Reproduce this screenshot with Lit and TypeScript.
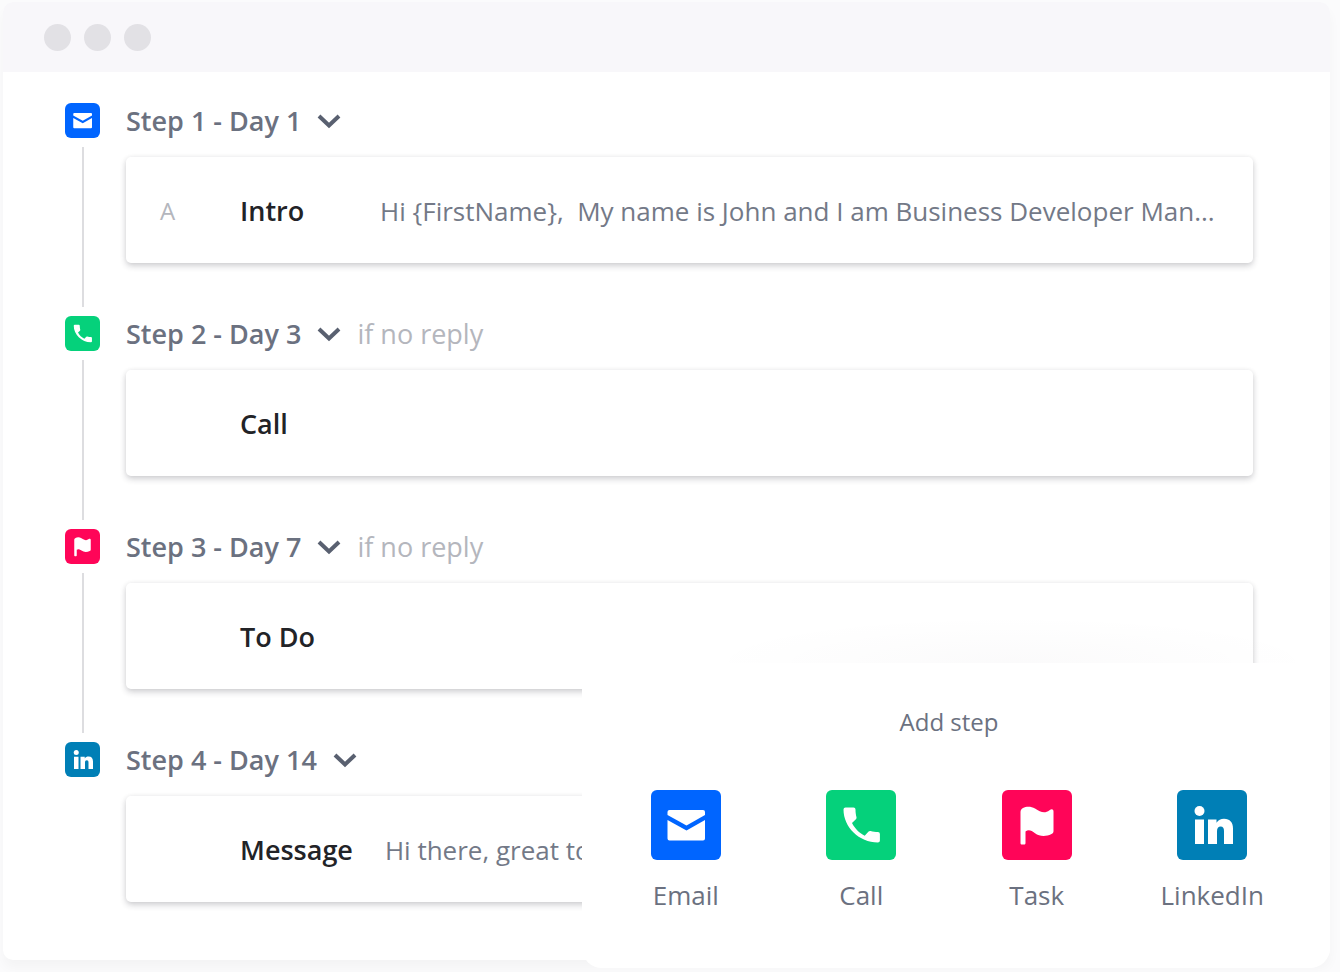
import { LitElement, html, css, svg, type TemplateResult } from "lit";
import { customElement, property } from "lit/decorators.js";

type Kind = "email" | "call" | "task" | "linkedin";

interface Step {
  kind: Kind;
  title: string;
  condition?: string;
  variant?: string;
  name: string;
  preview?: string;
}

const steps: Step[] = [
  {
    kind: "email",
    title: "Step 1 - Day 1",
    variant: "A",
    name: "Intro",
    preview: "Hi {FirstName},\u00a0 My name is John and I am Business Developer Man...",
  },
  { kind: "call", title: "Step 2 - Day 3", condition: "if no reply", name: "Call" },
  { kind: "task", title: "Step 3 - Day 7", condition: "if no reply", name: "To Do" },
  { kind: "linkedin", title: "Step 4 - Day 14", name: "Message", preview: "Hi there, great to" },
];

const choices: { kind: Kind; label: string }[] = [
  { kind: "email", label: "Email" },
  { kind: "call", label: "Call" },
  { kind: "task", label: "Task" },
  { kind: "linkedin", label: "LinkedIn" },
];

const glyphs: Record<Kind, TemplateResult> = {
  email: svg`<path d="M18.500 20H52a2 2 0 0 1 2 2v3L35.500 35.500 16.500 25v-3a2 2 0 0 1 2-2z"/>
    <path d="M16.500 30L35.500 40.500 54 30V48.500a2 2 0 0 1-2 2H18.500a2 2 0 0 1-2-2z"/>`,
  call: svg`<path d="M19.500 17.500h8a2 2 0 0 1 2 2c0 3 .4 5.300 1 7.800a2 2 0 0 1-.6 2L26 33c3.200 6 7 9.600 12.700 12.700l3.900-4.100a2 2 0 0 1 2-.5c2.400.8 4.800 1 7.300 1a2 2 0 0 1 2 2V50.500a2 2 0 0 1-2 2C33 52.500 17.500 37 17.500 19.500a2 2 0 0 1 2-2z"/>`,
  task: svg`<path d="M18.500 22c0-2 .8-3 2.500-4 3-1.700 8-2 12 .5 5.500 3.500 9.500 5.500 14.500 1.700 2-1.500 4-1.200 4 1.300V41c0 1.400-.5 2.300-2 3-6 3-12 2.500-16.500-.8-3.500-2.700-6.500-4-9.500-1.700V53c0 1-.6 1.500-1.500 1.500H20c-1 0-1.500-.5-1.500-1.500z"/>`,
  linkedin: svg`<circle cx="22.500" cy="21" r="5"/>
    <path d="M18 29.500h9V54h-9zM31 29.500h8.500v3.300c1.800-2.800 4.300-4 7.500-4 6 0 9 3.700 9 10V54h-9V41c0-3-1-4.500-3.300-4.500-2.500 0-3.700 1.700-3.700 4.700V54h-9z"/>`,
};

@customElement("step-icon")
export class StepIcon extends LitElement {
  @property({ reflect: true }) kind: Kind = "email";

  static styles = css`
    :host {
      display: block;
      flex: none;
      background: #0065ff;
      border-radius: 6px;
    }
    :host([kind="call"]) { background: #05d17b; }
    :host([kind="task"]) { background: #ff0558; }
    :host([kind="linkedin"]) { background: #007fb6; }
    .glyph {
      display: block;
      width: 100%;
      height: 100%;
      fill: #fff;
    }
  `;

  render() {
    return html`<svg class="glyph" viewBox="0 0 70 70" aria-hidden="true">${glyphs[this.kind]}</svg>`;
  }
}

@customElement("sequence-step")
export class SequenceStep extends LitElement {
  @property({ attribute: false }) step!: Step;
  @property({ type: Boolean }) last = false;

  static styles = css`
    :host {
      display: grid;
      grid-template-columns: 35px minmax(0, 1fr);
      column-gap: 26px;
    }
    .rail {
      display: flex;
      flex-direction: column;
      align-items: center;
      gap: 9px;
      padding-bottom: 9px;
    }
    .icon {
      width: 35px;
      height: 35px;
    }
    .line {
      flex: 1;
      width: 2px;
      background: #dddde0;
    }
    .body {
      padding-bottom: 53px;
    }
    .head {
      display: flex;
      align-items: center;
      gap: 16px;
      height: 36px;
      margin-bottom: 18px;
      font-size: 27px;
    }
    .toggle {
      display: flex;
      align-items: center;
      gap: 16px;
      padding: 0;
      border: 0;
      background: none;
      font: inherit;
      font-weight: 600;
      color: #6b7180;
      cursor: pointer;
    }
    .chevron {
      width: 24px;
      height: 16px;
      fill: none;
      stroke: #596070;
      stroke-width: 4;
    }
    .condition {
      color: #b4b6bd;
    }
    .card {
      display: flex;
      align-items: center;
      height: 106px;
      padding: 2px 34px 0;
      box-sizing: border-box;
      border-radius: 5px;
      background: #fff;
      box-shadow: 0 3px 6px rgba(30, 30, 45, 0.2), 0 0 5px rgba(30, 30, 45, 0.05);
    }
    .variant {
      flex: none;
      width: 80px;
      color: #b4b6bd;
      font-size: 24px;
    }
    .name {
      flex: none;
      min-width: 108px;
      margin-right: 32px;
      color: #222327;
      font-size: 27px;
      font-weight: 600;
    }
    .preview {
      min-width: 0;
      color: #737987;
      white-space: nowrap;
      overflow: hidden;
    }
  `;

  render() {
    const s = this.step;
    return html`
      <div class="rail">
        <step-icon class="icon" kind=${s.kind}></step-icon>
        ${this.last ? "" : html`<div class="line"></div>`}
      </div>
      <div class="body">
        <div class="head">
          <button class="toggle" type="button">
            ${s.title}
            <svg class="chevron" viewBox="0 0 24 16" aria-hidden="true"><path d="M2 3l10 9.500L22 3" /></svg>
          </button>
          ${s.condition ? html`<span class="condition">${s.condition}</span>` : ""}
        </div>
        <div class="card">
          <span class="variant">${s.variant ?? ""}</span>
          <span class="name">${s.name}</span>
          <span class="preview">${s.preview ?? ""}</span>
        </div>
      </div>
    `;
  }
}

@customElement("add-step-menu")
export class AddStepMenu extends LitElement {
  static styles = css`
    :host {
      display: block;
      box-sizing: border-box;
      padding: 40px 30px 55px 16px;
      border-radius: 20px;
      background: #fff;
    }
    .title {
      margin: 0 0 49px;
      font-size: 24px;
      line-height: 38px;
      font-weight: 400;
      text-align: center;
    }
    .choices {
      display: grid;
      grid-template-columns: repeat(4, minmax(0, 1fr));
    }
    .choice {
      display: flex;
      flex-direction: column;
      align-items: center;
      gap: 17px;
      padding: 0;
      border: 0;
      background: none;
      font: inherit;
      line-height: 36px;
      color: inherit;
      cursor: pointer;
    }
    .icon {
      width: 70px;
      height: 70px;
    }
  `;

  render() {
    return html`
      <h2 class="title">Add step</h2>
      <div class="choices">
        ${choices.map(
          (c) => html`<button class="choice" type="button">
            <step-icon class="icon" kind=${c.kind}></step-icon>
            ${c.label}
          </button>`,
        )}
      </div>
    `;
  }
}

@customElement("app-root")
export class AppRoot extends LitElement {
  static styles = css`
    :host {
      display: block;
      box-sizing: border-box;
      min-height: 100vh;
      padding: 2px 10px 12px 3px;
      background: #fbfbfc;
      font-family: "Open Sans", "Noto Sans", sans-serif;
      font-size: 26px;
      line-height: 36px;
      color: #6b7180;
    }
    .window {
      position: relative;
      border-radius: 10px;
      background: #fff;
      box-shadow: 0 8px 12px rgba(0, 0, 0, 0.03);
    }
    .bar {
      display: flex;
      align-items: center;
      gap: 13px;
      height: 70px;
      padding: 0 41px;
      border-radius: 10px 10px 0 0;
      background: #f8f7fa;
    }
    .dot {
      width: 27px;
      height: 27px;
      border-radius: 50%;
      background: #e2e1e5;
    }
    .steps {
      margin: 0;
      padding: 31px 77px 5px 62px;
      list-style: none;
    }
    .menu {
      position: absolute;
      right: 0;
      bottom: -8px;
      width: 748px;
      max-width: 100%;
    }
    .menu::before {
      content: "";
      position: absolute;
      left: 15%;
      right: 0;
      top: -48px;
      height: 48px;
      background: radial-gradient(ellipse at 50% 100%, rgba(40, 20, 50, 0.02), transparent 70%);
    }
  `;

  render() {
    return html`
      <main class="window">
        <div class="bar">
          <span class="dot"></span><span class="dot"></span><span class="dot"></span>
        </div>
        <ol class="steps">
          ${steps.map(
            (s, i) => html`<li>
              <sequence-step .step=${s} ?last=${i === steps.length - 1}></sequence-step>
            </li>`,
          )}
        </ol>
        <add-step-menu class="menu"></add-step-menu>
      </main>
    `;
  }
}
